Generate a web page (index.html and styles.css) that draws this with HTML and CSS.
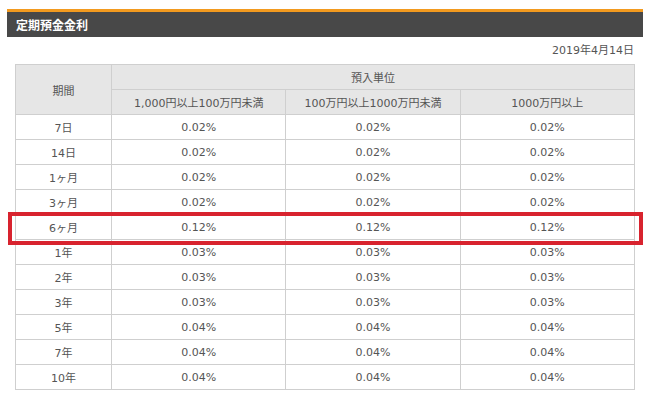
FILE: index.html
```html
<!DOCTYPE html>
<html lang="ja">
<head>
<meta charset="utf-8">
<link rel="stylesheet" href="styles.css">
</head>
<body>
<section class="panel">
  <h2 class="title">定期預金金利</h2>
  <p class="date">2019年4月14日</p>
  <div class="table-wrap">
    <table class="rates">
      <thead>
        <tr>
          <th class="c-term" rowspan="2">期間</th>
          <th colspan="3">預入単位</th>
        </tr>
        <tr>
          <th>1,000円以上100万円未満</th>
          <th>100万円以上1000万円未満</th>
          <th>1000万円以上</th>
        </tr>
      </thead>
      <tbody>
        <tr><td>7日</td><td>0.02%</td><td>0.02%</td><td>0.02%</td></tr>
        <tr><td>14日</td><td>0.02%</td><td>0.02%</td><td>0.02%</td></tr>
        <tr><td>1ヶ月</td><td>0.02%</td><td>0.02%</td><td>0.02%</td></tr>
        <tr><td>3ヶ月</td><td>0.02%</td><td>0.02%</td><td>0.02%</td></tr>
        <tr class="hl"><td>6ヶ月</td><td>0.12%</td><td>0.12%</td><td>0.12%</td></tr>
        <tr><td>1年</td><td>0.03%</td><td>0.03%</td><td>0.03%</td></tr>
        <tr><td>2年</td><td>0.03%</td><td>0.03%</td><td>0.03%</td></tr>
        <tr><td>3年</td><td>0.03%</td><td>0.03%</td><td>0.03%</td></tr>
        <tr><td>5年</td><td>0.04%</td><td>0.04%</td><td>0.04%</td></tr>
        <tr><td>7年</td><td>0.04%</td><td>0.04%</td><td>0.04%</td></tr>
        <tr><td>10年</td><td>0.04%</td><td>0.04%</td><td>0.04%</td></tr>
      </tbody>
    </table>
    <div class="highlight-box"></div>
  </div>
</section>
</body>
</html>
```
FILE: styles.css
```css
html, body {
  margin: 0;
  padding: 0;
  background: #ffffff;
}
body {
  font-family: "DejaVu Sans", "Noto Sans CJK JP", sans-serif;
  font-size: 11px;
  color: #555555;
}
.panel {
  width: 636px;
  margin: 9px 0 0 7px;
}
.title {
  margin: 0;
  height: 25px;
  line-height: 25px;
  border-top: 3px solid #f29a1f;
  background: #484848;
  color: #ffffff;
  font-family: "Noto Sans CJK JP", sans-serif;
  font-size: 12px;
  font-weight: bold;
  padding-left: 9px;
}
.date {
  margin: 0;
  height: 27px;
  line-height: 28px;
  text-align: right;
  padding-right: 9px;
  color: #555555;
}
.table-wrap {
  position: relative;
  margin: 0 8px;
}
.rates {
  width: 620px;
  border-collapse: collapse;
  table-layout: fixed;
}
.rates th,
.rates td {
  border: 1px solid #cfcfcf;
  height: 24px;
  padding: 0;
  text-align: center;
  vertical-align: middle;
  font-weight: normal;
  color: #555555;
}
.rates th {
  background: #e6e6e6;
}
.rates .c-term {
  width: 95px;
}
.highlight-box {
  position: absolute;
  left: -7px;
  top: 148px;
  width: 627px;
  height: 25px;
  border: 4px solid #d8232e;
  pointer-events: none;
}
```
